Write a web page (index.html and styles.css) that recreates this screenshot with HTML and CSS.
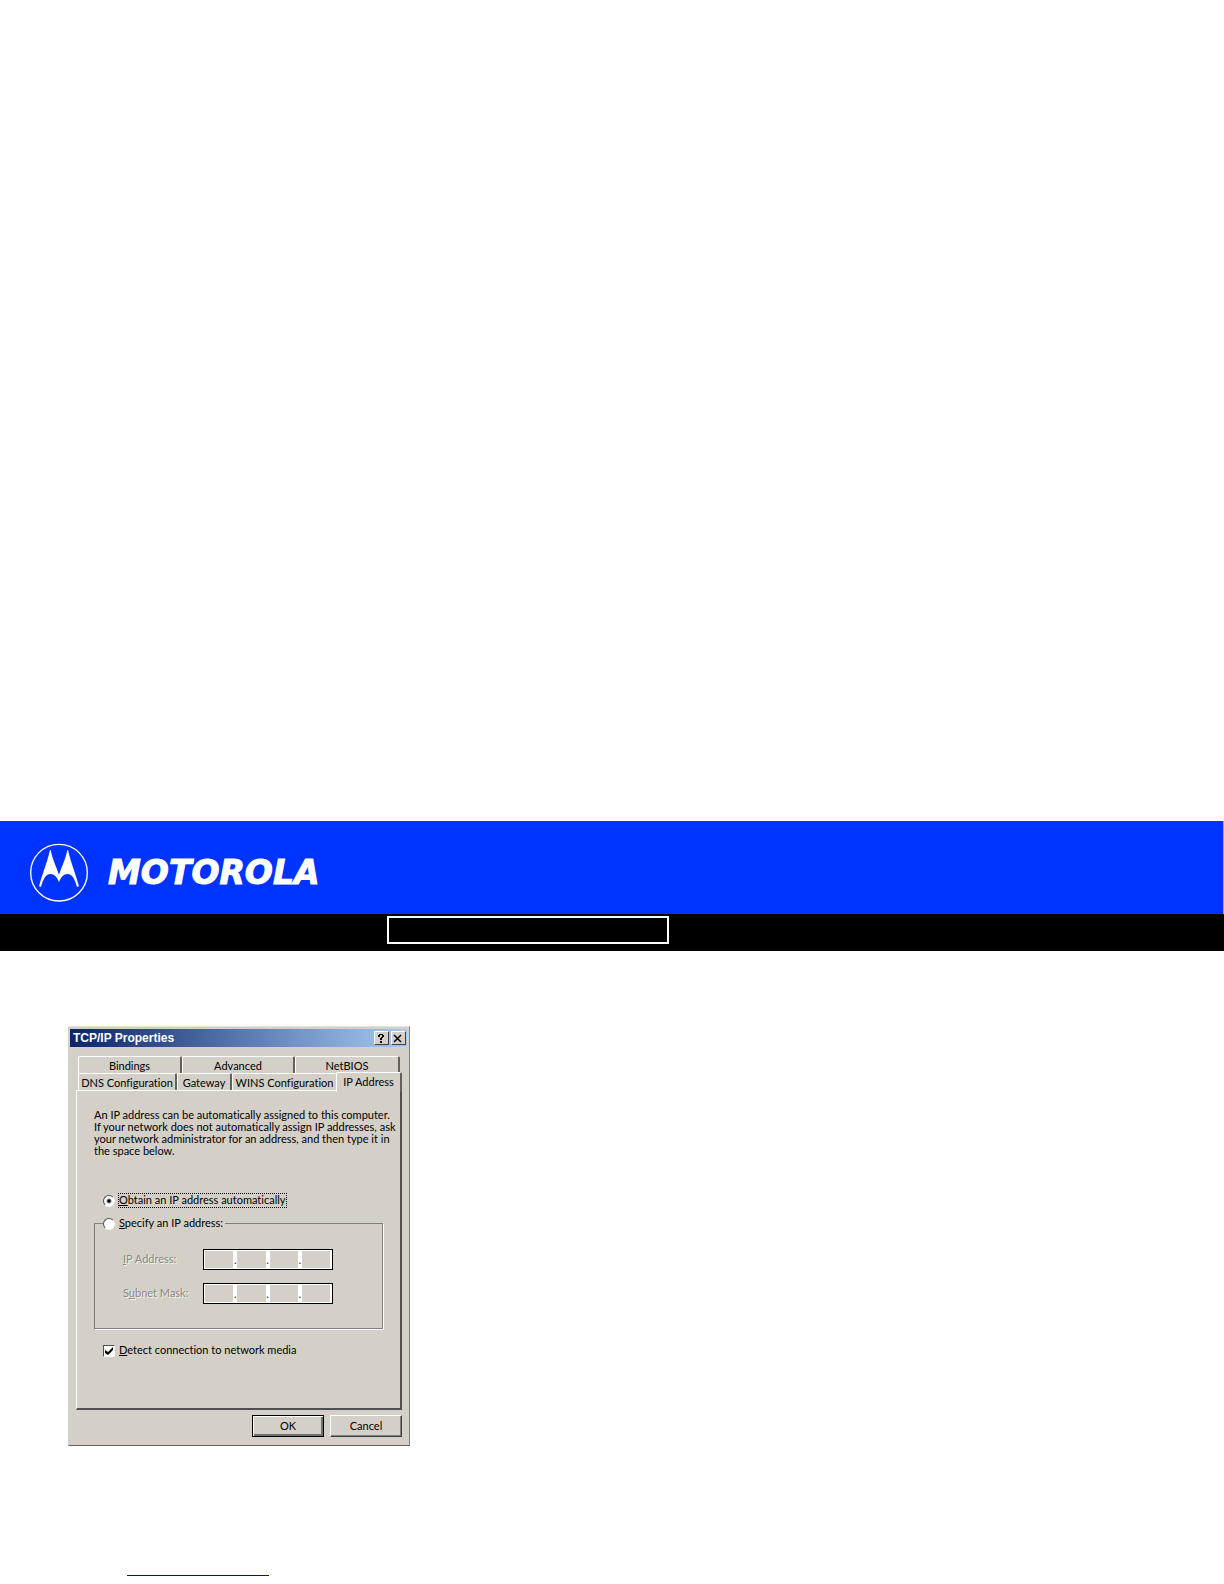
FILE: index.html
```html
<!DOCTYPE html>
<html lang="en">
<head>
    <meta charset="UTF-8">
    <meta name="viewport" content="width=device-width, initial-scale=1.0">
    <title>TCP/IP Properties</title>
    <link rel="stylesheet" href="styles.css">
</head>
<body>

    <header class="banner">
        <svg class="emblem" viewBox="0 0 198 198" aria-hidden="true">
            <circle cx="99" cy="98" r="85" fill="none" stroke="#fff" stroke-width="4"/>
            <path fill="#fff" d="M39 139 C47 108 62 72 72 30 L74 30 C80 60 91 80 99 104 C107 80 118 60 124 30 L126 30 C136 72 151 108 159 139 L153 141 C147 118 138 102 125 102 C113 102 104 112 99 127 C94 112 85 102 73 102 C60 102 51 118 45 141 Z"/>
        </svg>
        <span class="wordmark">MOTOROLA</span>
    </header>

    <nav class="menu">
        <div class="menu-box"></div>
    </nav>

    <main>
        <form class="dialog">
            <div class="title-bar">
                <h1>TCP/IP Properties</h1>
                <button type="button" class="title-button" aria-label="Help">
                    <svg viewBox="0 0 11 11"><path d="M3 3h2v1H3zM4 1h4v1H4zM3 2h2v1H3zM7 2h2v2H7zM6 4h2v1H6zM5 5h2v2H5zM5 8h2v2H5z"/></svg>
                </button>
                <button type="button" class="title-button" aria-label="Close">
                    <svg viewBox="0 0 11 11"><path d="M2 2l7 7M9 2L2 9" stroke="#000" stroke-width="1.500"/></svg>
                </button>
            </div>

            <!-- Tabs -->
            <div class="tabs" role="tablist">
                <div class="tab-row back">
                    <button type="button" class="tab" role="tab">Bindings</button>
                    <button type="button" class="tab" role="tab">Advanced</button>
                    <button type="button" class="tab" role="tab">NetBIOS</button>
                </div>
                <div class="tab-row front">
                    <button type="button" class="tab" role="tab">DNS Configuration</button>
                    <button type="button" class="tab" role="tab">Gateway</button>
                    <button type="button" class="tab" role="tab">WINS Configuration</button>
                    <button type="button" class="tab active" role="tab" aria-selected="true">IP Address</button>
                </div>
            </div>

            <div class="panel" role="tabpanel">
                <p class="intro">An IP address can be automatically assigned to this computer.<br>
                If your network does not automatically assign IP addresses, ask<br>
                your network administrator for an address, and then type it in<br>
                the space below.</p>

                <div class="option">
                    <input type="radio" id="obtain" name="mode" checked>
                    <label for="obtain" class="focused"><u>O</u>btain an IP address automatically</label>
                </div>

                <fieldset class="group">
                    <legend class="option">
                        <input type="radio" id="specify" name="mode">
                        <label for="specify"><u>S</u>pecify an IP address:</label>
                    </legend>
                    <div class="field">
                        <label for="ip1"><u>I</u>P Address:</label>
                        <div class="octets">
                            <input type="text" id="ip1" disabled><span>.</span>
                            <input type="text" aria-label="IP 2" disabled><span>.</span>
                            <input type="text" aria-label="IP 3" disabled><span>.</span>
                            <input type="text" aria-label="IP 4" disabled>
                        </div>
                    </div>
                    <div class="field">
                        <label for="mask1">S<u>u</u>bnet Mask:</label>
                        <div class="octets">
                            <input type="text" id="mask1" disabled><span>.</span>
                            <input type="text" aria-label="Mask 2" disabled><span>.</span>
                            <input type="text" aria-label="Mask 3" disabled><span>.</span>
                            <input type="text" aria-label="Mask 4" disabled>
                        </div>
                    </div>
                </fieldset>

                <div class="option">
                    <input type="checkbox" id="detect" checked>
                    <label for="detect"><u>D</u>etect connection to network media</label>
                </div>
            </div>

            <div class="actions">
                <button type="button" class="default">OK</button>
                <button type="button">Cancel</button>
            </div>
        </form>
    </main>

    <footer>
        <a href="#" class="footer-link" aria-label="Home"></a>
    </footer>

</body>
</html>
```
FILE: styles.css
```css
* {
    box-sizing: border-box;
}

body {
    margin: 0;
    padding-top: 821px;
    min-height: 100vh;
    display: flex;
    flex-direction: column;
    background-color: white;
    font-family: Lato, "Liberation Sans", sans-serif;
    font-variant-ligatures: none;
    font-size: 11px;
    line-height: 13px;
    color: black;
}

/* Banner */
.banner {
    display: flex;
    align-items: center;
    gap: 16px;
    height: 93px;
    padding: 10px 26px 0;
    background-color: #0033ff;
    border-right: 1px solid #8fa8ff;
}

.emblem {
    width: 66px;
    height: 66px;
}

.wordmark {
    font-family: "DejaVu Sans", sans-serif;
    font-size: 33px;
    line-height: 34px;
    font-weight: bold;
    font-style: italic;
    color: white;
    -webkit-text-stroke: 1px white;
}

.menu {
    height: 37px;
    padding: 2px 0 0 387px;
    background-color: black;
}

.menu-box {
    width: 282px;
    height: 28px;
    border: 2px solid white;
}

main {
    padding: 75px 68px 0;
}

/* Dialog */
.dialog {
    width: 342px;
    padding: 2px 2px 8px 1px;
    background-color: #d4d0c8;
    border: 1px solid #d4d0c8;
    border-top-color: #e4e2de;
    border-right-color: #808080;
    border-bottom-color: #606060;
}

.title-bar {
    display: flex;
    align-items: center;
    gap: 2px;
    height: 18px;
    padding: 0 1px 0 3px;
    background: linear-gradient(to right, #0a246a, #a6caf0);
}

.title-bar h1 {
    flex: 1;
    margin: 0;
    font-family: "Liberation Sans", Arial, sans-serif;
    font-size: 12px;
    color: white;
}

button {
    font: inherit;
    font-variant-ligatures: none;
    color: inherit;
    background-color: #d4d0c8;
}

.title-button {
    width: 15px;
    height: 14px;
    padding: 0;
    border: 1px solid;
    border-color: white #404040 #404040 white;
}

.title-button svg {
    display: block;
    width: 11px;
    height: 11px;
}

.tabs {
    padding: 9px 5px 0 6px;
}

.tab-row {
    display: grid;
}

.tab-row.back {
    grid-template-columns: 104fr 113fr 105fr;
    padding: 0 2px;
}

.tab-row.front {
    grid-template-columns: 99px 55px 104px 1fr;
    padding-left: 2px;
}

.tab {
    height: 17px;
    padding: 0;
    border: 1px solid white;
    border-right: 2px solid #606060;
    border-bottom: 0;
    border-radius: 2px 2px 0 0;
    white-space: nowrap;
}

.tab.active {
    position: relative;
    height: 20px;
    margin: -1px 0 -2px;
    padding-bottom: 3px;
}

.tab-row.front .tab:nth-child(3) {
    border-right: 0;
}

.panel {
    margin: 0 5px 0 6px;
    padding: 18px 17px 50px 17px;
    border: 1px solid white;
    border-right: 2px solid #505050;
    border-bottom: 2px solid #505050;
}

.intro {
    margin: 0 0 36px;
    line-height: 12px;
    white-space: nowrap;
}

.option {
    display: flex;
    align-items: center;
    gap: 3px;
    padding: 0 0 0 9px;
}

.option input {
    appearance: none;
    width: 12px;
    height: 12px;
    margin: 0;
    background-color: white;
    border: 1px solid;
    border-color: #505050 #f4f4f4 #f4f4f4 #505050;
}

.option input[type="radio"] {
    border-radius: 50%;
}

.option input[type="radio"]:checked {
    background-image: radial-gradient(circle, black 1px, transparent 3px);
}

.option input[type="checkbox"]:checked {
    background-image: url("data:image/svg+xml,%3Csvg xmlns='http://www.w3.org/2000/svg' viewBox='0 0 10 10'%3E%3Cpath d='M1 4l3 2 5-5v3L4 9 1 7z'/%3E%3C/svg%3E");
}

.option label {
    padding: 0 1px 2px;
}

.option .focused {
    outline: 1px dotted black;
    outline-offset: -1px;
}

.group {
    margin: 8px 0 14px;
    padding: 18px 0 24px 28px;
    border: 1px solid #808080;
    box-shadow: 1px 1px 0 white;
}

.group legend {
    margin-left: -20px;
    padding: 0 1px 0 0;
}

.field {
    display: grid;
    grid-template-columns: 80px 130px;
    align-items: center;
    color: #8a8880;
    text-shadow: 1px 1px 0 #f4f4f0;
}

.field label {
    padding-bottom: 3px;
}

.field + .field {
    margin-top: 13px;
}

.octets {
    display: flex;
    height: 21px;
    padding: 1px 2px 1px 1px;
    background-color: white;
    border: 1px solid black;
}

.octets input {
    flex: 1;
    min-width: 0;
    padding: 0;
    border: 0;
    background-color: #d4d0c8;
}

.octets span {
    width: 4px;
    text-align: center;
    line-height: 18px;
    color: #202020;
    text-shadow: none;
}

.actions {
    display: flex;
    justify-content: flex-end;
    gap: 6px;
    padding: 5px 5px 0;
}

.actions button {
    width: 72px;
    height: 22px;
    padding: 0 0 2px;
    border: 1px solid;
    border-color: white #404040 #404040 white;
    box-shadow: inset -1px -1px 0 #808080;
}

.actions .default {
    border-color: black;
    box-shadow: inset 1px 1px 0 white, inset -2px -2px 0 #707070;
}

footer {
    margin-top: auto;
    padding: 0 127px 8px;
}

.footer-link {
    display: block;
    width: 142px;
    height: 13px;
    border-bottom: 1px solid #10108c;
}
```
